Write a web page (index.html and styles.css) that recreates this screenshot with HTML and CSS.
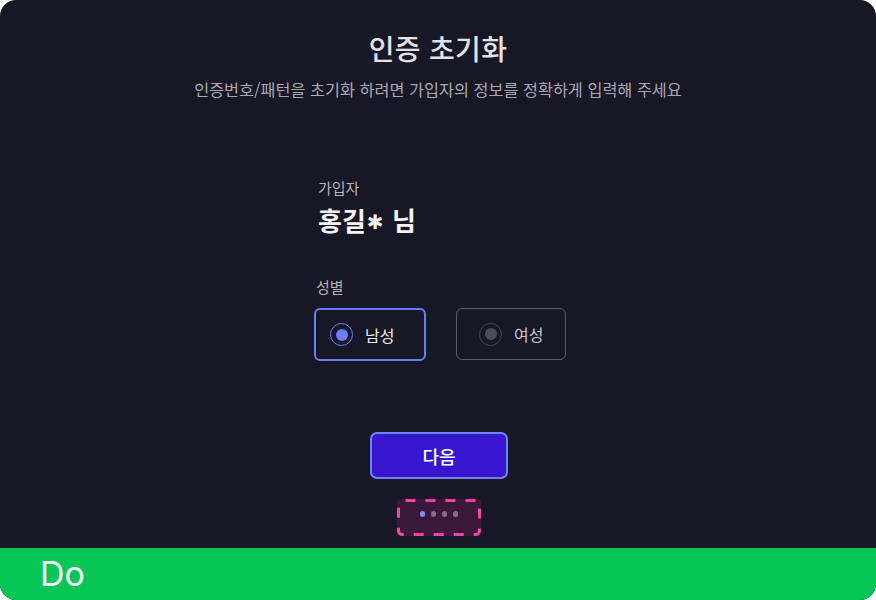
FILE: index.html
```html
<!DOCTYPE html>
<html lang="ko">
<head>
<meta charset="utf-8">
<link rel="stylesheet" href="styles.css">
</head>
<body>
<div class="frame">
  <main class="screen">
    <h1 class="title">인증 초기화</h1>
    <p class="subtitle">인증번호/패턴을 초기화 하려면 가입자의 정보를 정확하게 입력해 주세요</p>
    <section class="form">
      <div class="label">가입자</div>
      <div class="name">홍길<span class="star">✱</span> 님</div>
      <div class="label gender-label">성별</div>
      <div class="options">
        <div class="option selected"><span class="radio"><span class="dot"></span></span><span>남성</span></div>
        <div class="option"><span class="radio"><span class="dot"></span></span><span>여성</span></div>
      </div>
    </section>
    <button class="next">다음</button>
    <div class="pager">
      <svg class="pager-border" width="84" height="37" viewBox="0 0 84 37"><rect x="1.5" y="1.5" width="81" height="34" rx="4" ry="4" fill="none" stroke="#ff3fae" stroke-width="3" stroke-dasharray="10 10" stroke-dashoffset="-3"/></svg>
      <span class="pd active"></span><span class="pd"></span><span class="pd"></span><span class="pd"></span>
    </div>
  </main>
  <footer class="bar">Do</footer>
</div>
</body>
</html>
```
FILE: styles.css
```css
* { box-sizing: border-box; }
html, body { margin: 0; padding: 0; background: #ffffff; }
body { font-family: "Noto Sans CJK KR", "Noto Sans", sans-serif; }
.frame {
  width: 876px; height: 600px; border-radius: 16px; overflow: hidden;
  background: #181726; display: flex; flex-direction: column;
}
.screen { flex: 1; display: flex; flex-direction: column; align-items: center; padding-top: 28px; }
.title { margin: 0; font-size: 28px; font-weight: 500; color: #e2e2e6; line-height: 40px; letter-spacing: 0.3px; }
.subtitle { margin: 9px 0 0; font-size: 16.3px; color: #a9a9b2; line-height: 24px; }
.form { width: 252px; margin-top: 76px; margin-left: 4px; display: flex; flex-direction: column; }
.label { font-size: 15px; color: #b4b4bc; line-height: 22px; padding-left: 4px; }
.name { font-size: 26px; font-weight: 600; color: #f4f4f6; line-height: 36px; margin-top: 3px; padding-left: 4px; }
.star { font-family: "DejaVu Sans", sans-serif; font-size: 20px; font-weight: 700; margin: 0 1px; position: relative; top: -2px; }
.gender-label { margin-top: 34px; padding-left: 2px; }
.options { display: flex; gap: 30px; margin-top: 10px; }
.option {
  display: flex; align-items: center; gap: 12px; height: 53px; width: 112px; padding-left: 16px;
  border: 1px solid #5a5a66; border-radius: 6px; color: #c8c8ce; font-size: 16px;
}
.option + .option { width: 110px; height: 52px; padding-left: 22px; }
.option.selected { border: 2px solid #6c7cff; color: #ececf0; padding-left: 14px; }
.radio { width: 23px; height: 23px; border-radius: 50%; border: 1.5px solid #45454f; display: flex; align-items: center; justify-content: center; }
.radio .dot { width: 12px; height: 12px; border-radius: 50%; background: #4d4d55; }
.selected .radio { border-color: #6c7cff; }
.selected .radio .dot { background: #6c7cff; }
.next {
  margin-top: 71px; width: 138px; height: 47px; border-radius: 7px; border: 2.5px solid #6e84ff;
  background: #3617cf; color: #ffffff; font-family: inherit; font-size: 18px; font-weight: 500; margin-left: 2px;
}
.pager {
  position: relative; margin-top: 20px; width: 84px; height: 37px;
  background: #3a1838; border-radius: 4px; display: flex; gap: 5.5px; justify-content: center; align-items: center; padding-bottom: 7px; margin-left: 2px;
}
.pager-border { position: absolute; left: 0; top: 0; }
.pd { width: 5.5px; height: 5.5px; border-radius: 50%; background: #8a6a88; }
.pd.active { background: #8888ff; }
.bar {
  height: 52px; background: #06c755; color: #ffffff; font-family: "Inter", "Noto Sans", sans-serif;
  font-size: 34px; line-height: 52px; padding-left: 40px;
}
```
